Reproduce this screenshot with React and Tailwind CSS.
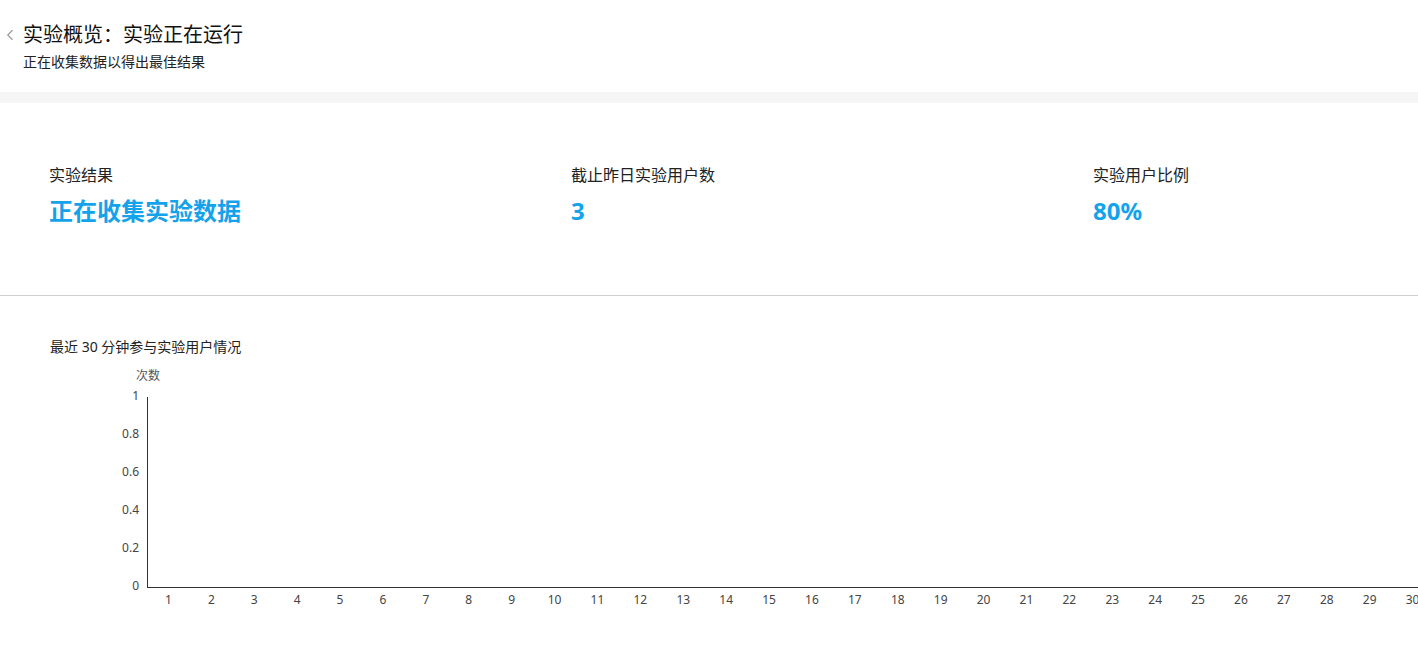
import { ChevronLeft } from 'lucide-react';

const yTicks = [1, 0.8, 0.6, 0.4, 0.2, 0];
const xTicks = Array.from({ length: 30 }, (_, i) => i + 1);

function Chart() {
  const left = 147;
  const top = 38;
  const step = 38;
  const band = 42.9;
  const bottom = top + step * 5;
  return (
    <svg width="1500" height="270" className="block" style={{ fontFamily: '"Noto Sans", "Liberation Sans", sans-serif' }}>
      <text x={136} y={18} fontSize="12" fill="#555" style={{ fontFamily: '"Noto Sans CJK SC", sans-serif' }} dominantBaseline="middle">次数</text>
      {yTicks.map((t, i) => (
        <text key={t} x={left - 8} y={top + i * step} fontSize="12" fill="#444" textAnchor="end" dominantBaseline="middle">
          {t}
        </text>
      ))}
      <line x1={left + 0.5} y1={top} x2={left + 0.5} y2={bottom + 1} stroke="#333" />
      <line x1={left} y1={bottom + 0.5} x2={left + band * 30} y2={bottom + 0.5} stroke="#333" />
      {xTicks.map((t, i) => (
        <text key={t} x={left + band * i + band / 2} y={bottom + 14} fontSize="12" fill="#444" textAnchor="middle" dominantBaseline="middle">
          {t}
        </text>
      ))}
    </svg>
  );
}

export default function App() {
  return (
    <div className="w-[1418px] h-[672px] overflow-hidden bg-white text-[#222]" style={{ fontFamily: '"Noto Sans", "Noto Sans CJK SC", sans-serif' }}>
      <div className="h-[92px] pt-[21px]">
        <div className="flex items-center">
          <ChevronLeft className="w-[18px] h-[18px] ml-[1px] mr-[4px] text-[#999]" strokeWidth={1.5} />
          <h1 className="text-[20px] leading-[28px] text-[#111]">实验概览：实验正在运行</h1>
        </div>
        <p className="ml-[23px] mt-[3px] text-[14px] leading-[20px] text-[#222]">正在收集数据以得出最佳结果</p>
      </div>
      <div className="h-[11px] bg-[#f5f5f5]" />
      <div className="flex w-[1664px] px-[49px] pt-[60px] h-[193px] border-b border-[#cfcfcf]">
        {[
          ['实验结果', '正在收集实验数据'],
          ['截止昨日实验用户数', '3'],
          ['实验用户比例', '80%'],
        ].map(([label, value]) => (
          <div key={label} className="flex-1">
            <div className="text-[16px] leading-[24px] text-[#222]">{label}</div>
            <div className="mt-[8px] text-[24px] leading-[32px] font-bold text-[#14a3ea]">{value}</div>
          </div>
        ))}
      </div>
      <div className="pt-[41px] pl-[50px]">
        <div className="text-[14px] leading-[20px] text-[#222]">最近 30 分钟参与实验用户情况</div>
      </div>
      <div className="mt-[2px]">
        <Chart />
      </div>
    </div>
  );
}
